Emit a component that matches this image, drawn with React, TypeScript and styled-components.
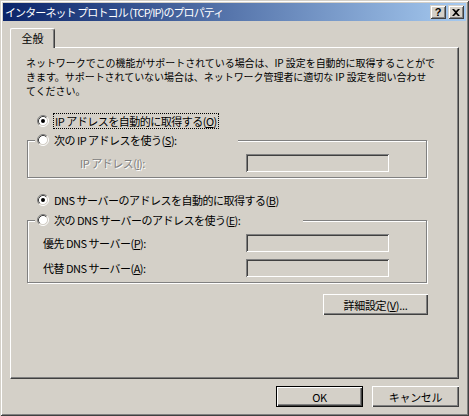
import styled, { createGlobalStyle } from 'styled-components';

const GlobalStyle = createGlobalStyle`
  html, body {
    margin: 0;
    padding: 0;
    background: #d4d0c8;
  }
  body {
    font-family: "Noto Sans CJK JP", "Noto Sans", sans-serif;
    font-size: 11px;
    color: #000;
  }
`;

const Radio = ({ checked }: { checked?: boolean }) => (
  <RadioIcon width="12" height="12" viewBox="0 0 12 12">
    <circle cx="6" cy="6" r="4.5" fill="#fff" />
    <path d="M2.11 9.89 A5.5 5.5 0 0 1 9.89 2.11" stroke="#808080" fill="none" />
    <path d="M9.89 2.11 A5.5 5.5 0 0 1 2.11 9.89" stroke="#fff" fill="none" />
    <path d="M2.82 9.18 A4.5 4.5 0 0 1 9.18 2.82" stroke="#404040" fill="none" />
    <path d="M9.18 2.82 A4.5 4.5 0 0 1 2.82 9.18" stroke="#d4d0c8" fill="none" />
    {checked && <circle cx="6" cy="6" r="2" fill="#000" />}
  </RadioIcon>
);

const App = () => {
  return (
    <>
      <GlobalStyle />
      <Window>
        <TitleBar>
          <Title>インターネット プロトコル (TCP/IP)のプロパティ</Title>
          <CaptionButtons>
            <CaptionButton>?</CaptionButton>
            <CaptionButton>
              <svg width="8" height="7" viewBox="0 0 8 7">
                <path d="M0 0h2l2 2 2-2h2L5 3.5 8 7H6L4 5 2 7H0l3-3.5z" fill="#000" />
              </svg>
            </CaptionButton>
          </CaptionButtons>
        </TitleBar>

        <Body>
          <TabStrip>
            <Tab>全般</Tab>
          </TabStrip>
          <Panel>
            <Intro>
              ネットワークでこの機能がサポートされている場合は、IP 設定を自動的に取得することがで
              <br />
              きます。サポートされていない場合は、ネットワーク管理者に適切な IP 設定を問い合わせ
              <br />
              てください。
            </Intro>

            <RadioRow>
              <Radio checked />
              <FocusLabel>
                IP アドレスを自動的に取得する(<u>O</u>)
              </FocusLabel>
            </RadioRow>

            <Group>
              <Legend $width={203}>
                <Radio />
                <span>
                  次の IP アドレスを使う(<u>S</u>):
                </span>
              </Legend>
              <Field $indent={45}>
                <FieldLabel $disabled>
                  IP アドレス(<u>I</u>):
                </FieldLabel>
                <TextBox />
              </Field>
            </Group>

            <RadioRow $top={14}>
              <Radio checked />
              <span>
                DNS サーバーのアドレスを自動的に取得する(<u>B</u>)
              </span>
            </RadioRow>

            <Group $top={4}>
              <Legend $width={268}>
                <Radio />
                <span>
                  次の DNS サーバーのアドレスを使う(<u>E</u>):
                </span>
              </Legend>
              <Fields>
                <Field $indent={8}>
                  <FieldLabel>
                    優先 DNS サーバー(<u>P</u>):
                  </FieldLabel>
                  <TextBox />
                </Field>
                <Field $indent={8}>
                  <FieldLabel>
                    代替 DNS サーバー(<u>A</u>):
                  </FieldLabel>
                  <TextBox />
                </Field>
              </Fields>
            </Group>

            <AdvancedRow>
              <Button $width={105}>
                詳細設定(<u>V</u>)...
              </Button>
            </AdvancedRow>
          </Panel>

          <DialogButtons>
            <Button $width={87} $default>
              OK
            </Button>
            <Button $width={87}>キャンセル</Button>
          </DialogButtons>
        </Body>
      </Window>
    </>
  );
};

const Window = styled.div`
  width: 469px;
  height: 416px;
  box-sizing: border-box;
  padding: 3px;
  display: flex;
  flex-direction: column;
  background: #d4d0c8;
  box-shadow: inset 1px 1px #d4d0c8, inset -1px -1px #404040, inset 2px 2px #fff,
    inset -2px -2px #808080;
`;

const TitleBar = styled.div`
  height: 18px;
  display: flex;
  align-items: center;
  justify-content: space-between;
  padding: 0 2px;
  background: linear-gradient(to right, #0a246a, #a6caf0);
  color: #fff;
`;

const Title = styled.span`
  font-size: 11px;
  letter-spacing: -0.9px;
  white-space: nowrap;
`;

const CaptionButtons = styled.div`
  display: flex;
  gap: 2px;
`;

const CaptionButton = styled.div`
  width: 16px;
  height: 14px;
  box-sizing: border-box;
  display: flex;
  align-items: center;
  justify-content: center;
  background: #d4d0c8;
  color: #000;
  font-family: "Liberation Sans", sans-serif;
  font-weight: bold;
  font-size: 11px;
  box-shadow: inset 1px 1px #d4d0c8, inset -1px -1px #404040, inset 2px 2px #fff,
    inset -2px -2px #808080;
`;

const Body = styled.div`
  flex: 1;
  display: flex;
  flex-direction: column;
  padding: 7px 7px 0;
`;

const TabStrip = styled.div`
  display: flex;
  height: 19px;
`;

const Tab = styled.div`
  position: relative;
  z-index: 1;
  width: 45px;
  height: 20px;
  box-sizing: border-box;
  display: flex;
  align-items: center;
  justify-content: center;
  padding-bottom: 1px;
  background: #d4d0c8;
  border-top: 1px solid #fff;
  border-left: 1px solid #fff;
  border-right: 1px solid #404040;
  border-radius: 2px 3px 0 0;
  box-shadow: inset -1px 0 #808080;
`;

const Panel = styled.div`
  height: 332px;
  box-sizing: border-box;
  padding: 0 16px 0 15px;
  border-top: 1px solid #fff;
  border-left: 1px solid #fff;
  border-right: 1px solid #404040;
  border-bottom: 1px solid #404040;
  box-shadow: inset -1px -1px #808080;
`;

const Intro = styled.p`
  margin: 8px 0 0;
  font-size: 10px;
  line-height: 14px;
  letter-spacing: -0.05px;
  white-space: nowrap;
`;

const RadioRow = styled.div<{ $top?: number }>`
  display: flex;
  align-items: center;
  gap: 5px;
  height: 16px;
  margin: ${(p) => p.$top ?? 15}px 0 0 11px;
  letter-spacing: -0.5px;
`;

const RadioIcon = styled.svg`
  flex: none;
  display: block;
`;

const FocusLabel = styled.span`
  outline: 1px dotted #000;
  outline-offset: 0;
  line-height: 14px;
  padding: 0 1px;
`;

const Group = styled.fieldset<{ $top?: number }>`
  margin: ${(p) => p.$top ?? 3}px 15px 0 1px;
  padding: 6px 0 5px 7px;
  border: 1px solid #808080;
  box-shadow: inset 1px 1px #fff, 1px 1px #fff;
  min-width: 0;
`;

const Legend = styled.legend<{ $width: number }>`
  width: ${(p) => p.$width}px;
  height: 16px;
  box-sizing: border-box;
  padding: 0 0 0 2px;
  display: flex;
  align-items: center;
  gap: 5px;
  background: #d4d0c8;
  letter-spacing: -0.5px;
`;

const Fields = styled.div`
  display: flex;
  flex-direction: column;
  gap: 7px;
`;

const Field = styled.div<{ $indent: number }>`
  display: grid;
  grid-template-columns: 211px 143px;
  align-items: center;

  & > :first-child {
    padding-left: ${(p) => p.$indent}px;
  }
`;

const FieldLabel = styled.span<{ $disabled?: boolean }>`
  letter-spacing: -0.5px;
  white-space: nowrap;
  color: ${(p) => (p.$disabled ? '#808080' : '#000')};
  text-shadow: ${(p) => (p.$disabled ? '1px 1px 0 #fff' : 'none')};
`;

const TextBox = styled.div`
  height: 18px;
  background: #d4d0c8;
  box-shadow: inset 1px 1px #808080, inset -1px -1px #fff, inset 2px 2px #404040,
    inset -2px -2px #d4d0c8;
`;

const AdvancedRow = styled.div`
  display: flex;
  justify-content: flex-end;
  margin: 11px 14px 0 0;
`;

const Button = styled.div<{ $width: number; $default?: boolean }>`
  width: ${(p) => p.$width}px;
  height: 21px;
  box-sizing: border-box;
  display: flex;
  align-items: center;
  justify-content: center;
  background: #d4d0c8;
  letter-spacing: -0.3px;
  border: ${(p) => (p.$default ? '1px solid #000' : 'none')};
  box-shadow: inset 1px 1px #fff, inset -1px -1px #404040, inset -2px -2px #808080;
`;

const DialogButtons = styled.div`
  display: flex;
  justify-content: flex-end;
  gap: 9px;
  margin-top: 7px;
`;

export default App;
